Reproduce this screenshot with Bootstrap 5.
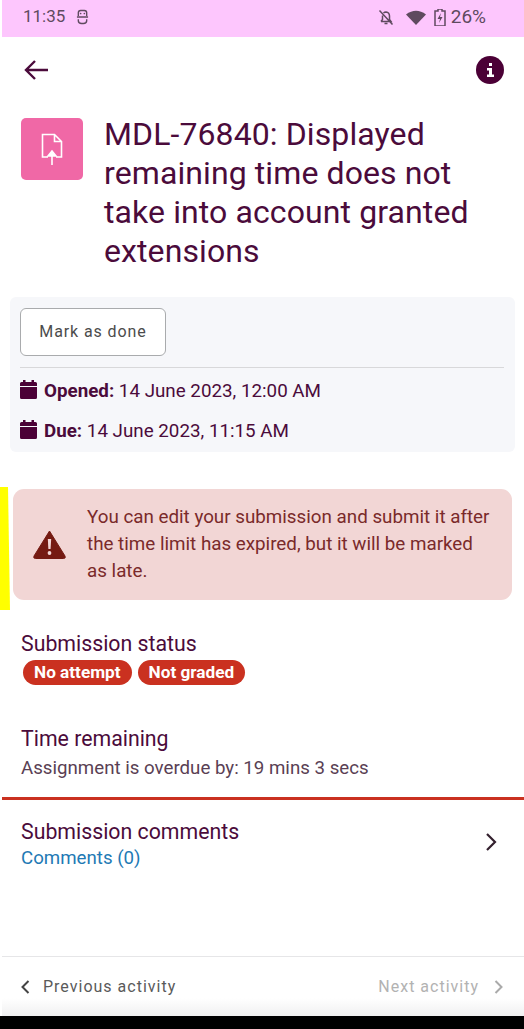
<!DOCTYPE html>
<html lang="en">
<head>
  <meta charset="UTF-8">
  <meta name="viewport" content="width=device-width, initial-scale=1.0">
  <title>MDL-76840</title>
  <link href="https://cdn.jsdelivr.net/npm/bootstrap@5.3.3/dist/css/bootstrap.min.css" rel="stylesheet">
  <style>
    html, body { height: 100%; }
    body { font-family: Roboto, "Liberation Sans", sans-serif; color: #4b0b3b; background: #fff; overflow: hidden; }
    .phone { height: 1029px; padding-left: 2px; }
    .status-bar { height: 37px; background: #fdc6fd; color: #5f4a5f; font-size: 17px; padding: 0 38px 3px 21px; }
    .status-left { gap: 11px; }
    .batt-text { font-size: 19px; margin-left: -3px; }
    .top-bar { height: 65px; padding: 0 20px 0 21px; }
    .info-dot { width: 28px; height: 28px; border-radius: 50%; background: #4b0036; color: #fff; }
    .head-row { padding: 0 30px 0 19px; gap: 21px; }
    .mod-icon { width: 62px; height: 62px; flex: none; margin-top: 16px; background: #f068a6; border-radius: 5px; }
    .page-title { font-size: 32px; line-height: 39px; font-weight: 400; margin: 13px 0 0; letter-spacing: .1px; }
    .dates-box { background: #f6f7fa; margin: 26px 9px 0 8px; border-radius: 6px; padding: 11px 11px 4px 10px; height: 155px; }
    .done-btn { width: 146px; height: 48px; background: #fff; border: 1px solid #a9abad; border-radius: 6px; color: #4c4c4c; font-size: 16px; letter-spacing: .9px; padding: 0; }
    .dates-box hr { margin: 11px 0 10px; border-color: #d8d8da; opacity: 1; }
    .date-line { font-size: 18.8px; line-height: 26px; margin-bottom: 14px; gap: 7px; }
    .date-line svg { margin-bottom: 4px; flex: none; }
    .warn-row { margin-top: 35px; margin-left: -2px; height: 123px; }
    .yellow-mark { width: 10px; height: 123px; background: #ffff00; flex: none; clip-path: polygon(0 0, 8px 0, 10px 100%, 0 100%); }
    .warn-box { margin: 2px 12px 0 3px; height: 111px; background: #f2d6d5; border-radius: 11px; color: #7a2a2a; font-size: 18.8px; line-height: 27px; padding: 0 18px 0 20px; gap: 21px; }
    .warn-box svg { flex: none; }
    .info-block { padding: 0 19px; }
    .status-block { margin-top: 21px; }
    .time-block { margin-top: 41px; }
    .sub-title { font-size: 21.3px; line-height: 26px; }
    .pill-row { gap: 6px; margin: 3px 0 0 2px; }
    .state-pill { background: #ca3120; color: #fff; font-size: 17.2px; font-weight: 700; line-height: 25px; border-radius: 13px; padding: 0 11px; }
    .muted-line { color: #5a3f54; font-size: 18.7px; line-height: 26px; margin-top: 3px; }
    .red-rule { height: 3px; background: #ca3120; margin-top: 16px; }
    .comments-row { margin-top: 19px; }
    .comments-row svg { margin-bottom: 6px; }
    .link-blue { color: #1f7ab5; font-size: 18.7px; line-height: 26px; }
    .foot-bar { height: 60px; border-top: 1px solid #e6e6e8; font-size: 16px; letter-spacing: 1px; color: #5a5a5a; padding: 0 20px 0 18px; background: linear-gradient(#fff 70%, #f0f0f1); }
    .foot-prev-label { margin-left: 13px; }
    .foot-next { color: #b2b2b2; gap: 15px; }
    .black-strip { height: 13px; background: #000; margin-left: -2px; }
  </style>
</head>
<body>
  <div class="phone d-flex flex-column">
    <div class="status-bar d-flex align-items-center justify-content-between">
      <div class="status-left d-flex align-items-center">
        <span>11:35</span>
        <svg width="13" height="16" viewBox="0 0 14 16" fill="none" stroke="#5f4a5f" stroke-width="1.500"><path d="M2.500 7V3.500Q2.500 1 5 1h4q2.500 0 2.500 2.500V7M1 8h12M2.500 10.500v1.500Q2.500 15 6 15h2q3.500 0 3.500-3v-1.500"/><path d="M5 4.200h.01M9 4.200h.01" stroke-linecap="round" stroke-width="1.800"/></svg>
      </div>
      <div class="d-flex align-items-center gap-2">
        <svg width="16" height="16" viewBox="0 0 16 16" fill="none" stroke="#5f4a5f" stroke-width="1.500"><path d="M3 12.500h10l-1.500-2V7q0-3.500-3.500-4-1.500 0-2.500 1M4.500 6.500v4l-1.500 2M6.500 14.500h3M1.500 1.500l13 14"/></svg>
        <svg class="ms-1" width="20" height="15" viewBox="0 0 20 15"><path d="M0 4.500Q10-3 20 4.500L10 15z" fill="#5f4a5f"/></svg>
        <svg width="12" height="17" viewBox="0 0 12 17"><path d="M4 0h4v2h3v15H1V2h3z" fill="none" stroke="#5f4a5f" stroke-width="1.500"/><path d="M7 4 3.500 10H6l-1 4 3.500-6H6z" fill="#5f4a5f"/></svg>
        <span class="batt-text">26%</span>
      </div>
    </div>

    <div class="top-bar d-flex align-items-center justify-content-between">
      <svg width="25" height="22" viewBox="0 0 25 22" fill="none" stroke="#4b0b3b" stroke-width="2.400"><path d="M25 11H3M12 2l-9 9 9 9"/></svg>
      <div class="info-dot d-flex align-items-center justify-content-center">
        <svg width="9" height="14" viewBox="0 0 9 14" fill="#fff"><path d="M3 0h3v3H3zM1 5h5v6.500h2V14H1v-2.500h2V7.500H1z"/></svg>
      </div>
    </div>

    <div class="head-row d-flex align-items-start">
      <div class="mod-icon d-flex align-items-center justify-content-center">
        <svg width="22" height="32" viewBox="0 0 22 32" fill="none" stroke="#fff" stroke-width="1.600"><path d="M7 24H1.500V1.500h12l7 7V24H15M13.500 1.500v7h7"/><path d="M11 32V18M7 23l4-5 4 5z" fill="#fff"/></svg>
      </div>
      <h1 class="page-title">MDL-76840: Displayed remaining time does not take into account granted extensions</h1>
    </div>

    <div class="dates-box">
      <button type="button" class="btn done-btn">Mark as done</button>
      <hr>
      <div class="date-line d-flex align-items-center">
        <svg width="17" height="19" viewBox="0 0 17 19" fill="#4b0036"><path d="M3 0h2.500v2h6V0H14v2h1.500Q17 2 17 3.500V6H0V3.500Q0 2 1.500 2H3zM0 7h17v10.500q0 1.500-1.500 1.500h-14Q0 19 0 17.500z"/></svg>
        <span><strong>Opened:</strong> 14 June 2023, 12:00 AM</span>
      </div>
      <div class="date-line d-flex align-items-center">
        <svg width="17" height="19" viewBox="0 0 17 19" fill="#4b0036"><path d="M3 0h2.500v2h6V0H14v2h1.500Q17 2 17 3.500V6H0V3.500Q0 2 1.500 2H3zM0 7h17v10.500q0 1.500-1.500 1.500h-14Q0 19 0 17.500z"/></svg>
        <span><strong>Due:</strong> 14 June 2023, 11:15 AM</span>
      </div>
    </div>

    <div class="warn-row d-flex align-items-start">
      <div class="yellow-mark"></div>
      <div class="warn-box flex-grow-1 d-flex align-items-center">
        <svg width="33" height="29" viewBox="0 0 33 29"><path d="M16.500 1 32 26q1 2.500-1.500 2.500h-28Q0 28.500 1 26z" fill="#751a12" stroke="#751a12" stroke-linejoin="round"/><path d="M14.800 9h3.400l-.6 10h-2.200z" fill="#f2d6d5"/><circle cx="16.500" cy="23" r="1.900" fill="#f2d6d5"/></svg>
        <div>You can edit your submission and submit it after the time limit has expired, but it will be marked as late.</div>
      </div>
    </div>

    <div class="info-block status-block">
      <div class="sub-title">Submission status</div>
      <div class="pill-row d-flex">
        <span class="state-pill">No attempt</span>
        <span class="state-pill">Not graded</span>
      </div>
    </div>

    <div class="info-block time-block">
      <div class="sub-title">Time remaining</div>
      <div class="muted-line">Assignment is overdue by: 19 mins 3 secs</div>
    </div>
    <div class="red-rule"></div>

    <div class="info-block d-flex align-items-center justify-content-between comments-row">
      <div>
        <div class="sub-title">Submission comments</div>
        <div class="link-blue">Comments (0)</div>
      </div>
      <svg class="me-2" width="12" height="20" viewBox="0 0 12 20" fill="none" stroke="#33202e" stroke-width="2.200"><path d="M2 2l8 8-8 8"/></svg>
    </div>

    <div class="flex-grow-1"></div>

    <div class="foot-bar d-flex align-items-center justify-content-between">
      <div class="d-flex align-items-center">
        <svg width="10" height="16" viewBox="0 0 10 16" fill="none" stroke="#444" stroke-width="2"><path d="M8.500 2l-6 6 6 6"/></svg>
        <span class="foot-prev-label">Previous activity</span>
      </div>
      <div class="foot-next d-flex align-items-center">
        <span>Next activity</span>
        <svg width="10" height="16" viewBox="0 0 10 16" fill="none" stroke="#aaa" stroke-width="2"><path d="M1.500 2l6 6-6 6"/></svg>
      </div>
    </div>
    <div class="black-strip"></div>
  </div>

  <script src="https://cdn.jsdelivr.net/npm/bootstrap@5.3.3/dist/js/bootstrap.bundle.min.js"></script>
</body>
</html>
